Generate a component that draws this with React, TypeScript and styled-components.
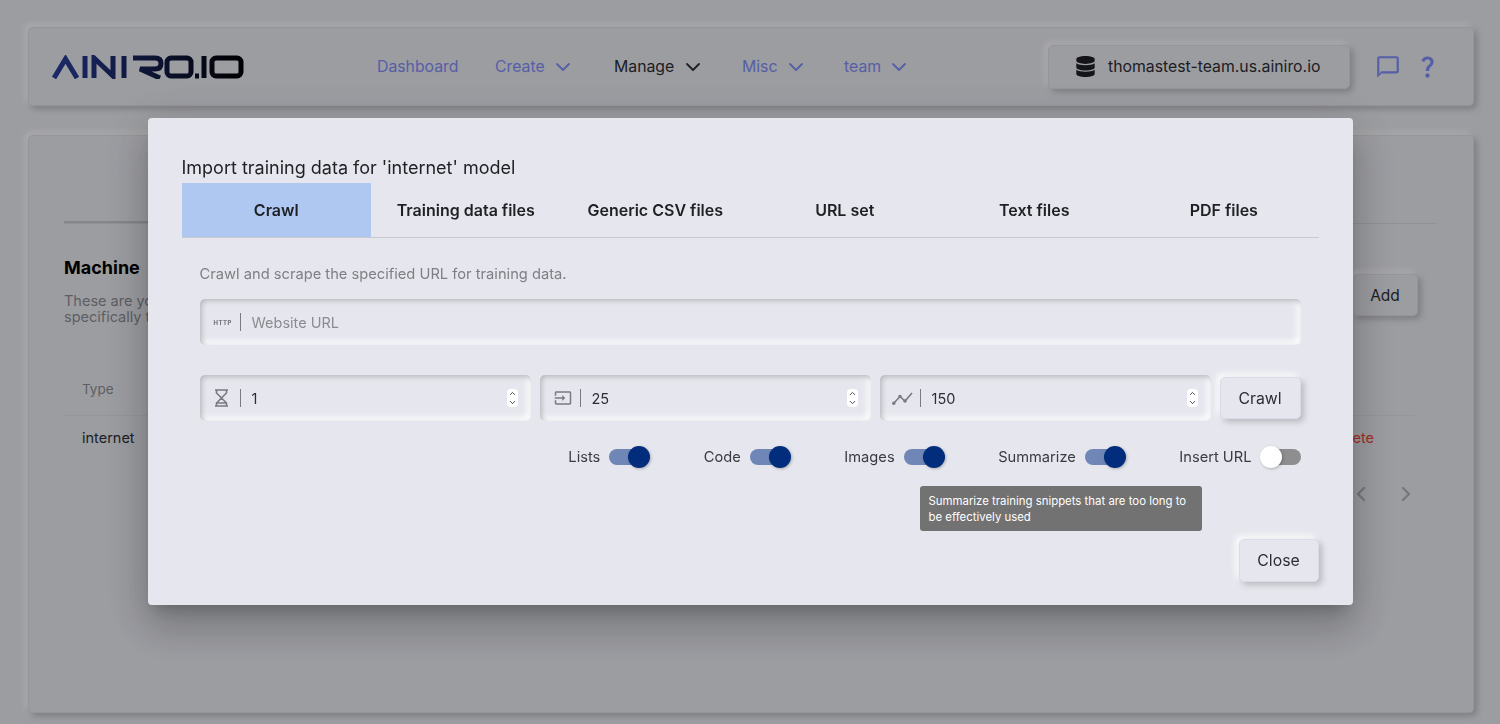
import React from "react";
import styled, { createGlobalStyle } from "styled-components";
import { ChevronDown, ChevronLeft, ChevronRight, ChevronUp } from "lucide-react";
import { FaDatabase } from "react-icons/fa";

const GlobalStyle = createGlobalStyle`
  html, body { margin: 0; padding: 0; height: 100%; overflow: hidden; }
  body { background: #e6e7ee; font-family: Inter, "Liberation Sans", sans-serif; color: #1f2024; }
  * { box-sizing: border-box; }
`;

const raised = "3px 3px 6px #b8b9be, -3px -3px 6px #ffffff";
const sunken = "inset 2px 2px 5px #b8b9be, inset -3px -3px 7px #ffffff";

const Page = styled.div`
  height: 724px;
  padding: 27px 26px 11px 28px;
  display: flex;
  flex-direction: column;
  gap: 29px;
`;

const Navbar = styled.header`
  height: 79px;
  flex: none;
  display: flex;
  align-items: center;
  padding: 0 32px 0 23px;
  border: 1px solid #dcdde6;
  border-radius: 5px;
  box-shadow: ${raised};
`;

const Logo = styled.svg`
  flex: none;
  width: 192px;
  height: 24px;
`;

const NavLinks = styled.nav`
  display: flex;
  align-items: center;
  margin-left: 133px;
  flex: 1;
`;

const NavLink = styled.a<{ $active?: boolean; $space: number }>`
  display: flex;
  align-items: center;
  gap: 6.3px;
  width: ${(p) => p.$space}px;
  flex: none;
  font-size: 15.8px;
  color: ${(p) => (p.$active ? "#2d2e33" : "#7f8cf5")};
  svg { flex: none; }
`;

const ServerButton = styled.button`
  width: 302px;
  height: 44px;
  margin-right: 25px;
  display: flex;
  align-items: center;
  gap: 12px;
  padding: 0 0 0 26px;
  background: #e6e7ee;
  border: 1px solid #dcdde6;
  border-radius: 5px;
  box-shadow: ${raised};
  font: 400 15.8px Inter, sans-serif;
  color: #2d2e33;
`;

const NavIcon = styled.svg`
  flex: none;
  color: #7f8cf5;
  fill: currentColor;
`;

const HelpIcon = styled(NavIcon)`
  margin-left: 13px;
`;

const Card = styled.main`
  flex: 1;
  padding: 85px 36px 0 35px;
  border: 1px solid #dcdde6;
  border-radius: 5px;
  box-shadow: ${raised};
`;

const Rule = styled.hr`
  margin: 0;
  border: 0;
  height: 3px;
  background:
    linear-gradient(#d5d6dd, #d5d6dd) bottom / 100% 1px no-repeat,
    linear-gradient(#c4c5cc, #c4c5cc) left / 20% 100% no-repeat;
`;

const SectionHead = styled.div`
  display: flex;
  justify-content: space-between;
  margin-top: 33px;
  padding-right: 19px;
`;

const SectionTitle = styled.h2`
  margin: 0 0 14px;
  font-size: 18px;
  font-weight: 700;
  line-height: 22px;
  color: #000;
`;

const SectionText = styled.p`
  margin: 0;
  font-size: 14.5px;
  line-height: 16px;
  color: #8b8c92;
`;

const AddButton = styled.button`
  width: 66px;
  height: 42px;
  margin-top: 17px;
  background: #e6e7ee;
  border: 1px solid #dcdde6;
  border-radius: 5px;
  box-shadow: ${raised};
  font: 400 15.5px Inter, sans-serif;
  color: #2d2e33;
`;

const Table = styled.div`
  margin: 42px 22px 0 0;
  font-size: 14.5px;
`;

const TableHead = styled.div`
  height: 49px;
  display: flex;
  align-items: center;
  padding: 0 18px 4px;
  border-bottom: 1px solid #dcdde6;
  font-size: 13.5px;
  color: #8b8c92;
`;

const TableRow = styled.div`
  height: 43px;
  display: flex;
  align-items: center;
  justify-content: space-between;
  padding: 0 41px 0 18px;
  color: #2d2e33;
`;

const DeleteLink = styled.span`
  color: #f04438;
`;

const Pager = styled.div`
  display: flex;
  justify-content: flex-end;
  gap: 21px;
  margin-top: 23px;
  padding-right: 19px;
  color: #b0b1b8;
`;

const Backdrop = styled.div`
  position: fixed;
  inset: 0;
  background: rgba(0, 0, 0, 0.32);
  display: flex;
  align-items: center;
  justify-content: center;
`;

const Modal = styled.section`
  position: relative;
  width: 1205px;
  height: 487px;
  margin-bottom: 1px;
  padding: 38px 34px 0;
  background: #e6e7ee;
  border-radius: 4px;
  box-shadow: 0 11px 15px -7px rgba(0, 0, 0, 0.2), 0 24px 38px 3px rgba(0, 0, 0, 0.14), 0 9px 46px 8px rgba(0, 0, 0, 0.12);
`;

const ModalTitle = styled.h1`
  margin: 0;
  height: 27px;
  font-size: 18px;
  font-weight: 400;
  line-height: 24px;
  color: #1f2024;
`;

const Tabs = styled.div`
  display: flex;
  border-bottom: 1px solid #c9cad0;
`;

const Tab = styled.div<{ $active?: boolean }>`
  flex: 1;
  height: 54px;
  display: flex;
  align-items: center;
  justify-content: center;
  font-size: 16px;
  font-weight: 600;
  color: #1f2024;
  background: ${(p) => (p.$active ? "#aec8f1" : "transparent")};
`;

const TabBody = styled.div`
  padding: 27px 18px 0;
`;

const Hint = styled.p`
  margin: 0 0 16px;
  font-size: 14.7px;
  line-height: 18px;
  color: #7e7f84;
`;

const Field = styled.label`
  flex: 1;
  min-width: 0;
  height: 46px;
  display: flex;
  align-items: center;
  padding: 0 12px 0 14px;
  border-radius: 5px;
  box-shadow: ${sunken};
`;

const FieldIcon = styled.span`
  flex: none;
  width: 27px;
  height: 22px;
  margin-right: 11px;
  display: flex;
  align-items: center;
  justify-content: space-between;
  color: #7a7b80;
  &::after {
    content: "";
    width: 1px;
    height: 18px;
    background: #7a7b80;
  }
`;

const HttpText = styled.span`
  font-size: 6px;
  font-weight: 800;
  letter-spacing: 0.5px;
`;

const ChartIcon = styled.svg`
  margin-left: -2px;
`;

const FieldInput = styled.input`
  flex: 1;
  min-width: 0;
  border: 0;
  outline: 0;
  padding: 0;
  background: transparent;
  font: 400 14.5px Inter, sans-serif;
  color: #2d2e33;
  &::placeholder { color: #8b8c92; }
  &::-webkit-inner-spin-button { display: none; }
`;

const Spinner = styled.span`
  flex: none;
  width: 11px;
  height: 18px;
  margin-right: 1px;
  background: #fff;
  border-radius: 4px;
  display: flex;
  flex-direction: column;
  align-items: center;
  justify-content: center;
  color: #444;
`;

const NumberRow = styled.div`
  display: flex;
  align-items: center;
  gap: 9px;
  margin-top: 30px;
`;

const ActionButton = styled.button`
  flex: none;
  width: 81px;
  height: 42px;
  background: #e6e7ee;
  border: 1px solid #d9dce8;
  border-radius: 5px;
  box-shadow: ${raised};
  font: 400 15.8px Inter, sans-serif;
  color: #2d2e33;
`;

const Options = styled.div`
  display: flex;
  justify-content: flex-end;
  gap: 54.5px;
  margin-top: 25px;
`;

const Option = styled.div`
  display: flex;
  align-items: center;
  gap: 9px;
  height: 22px;
  font-size: 14.66px;
  color: #3a3b40;
`;

const Toggle = styled.span<{ $on: boolean }>`
  position: relative;
  width: 40px;
  height: 16px;
  border-radius: 8px;
  background: ${(p) => (p.$on ? "#6f86b6" : "#8e8e90")};
  &::after {
    content: "";
    position: absolute;
    top: -3px;
    ${(p) => (p.$on ? "right: -1px;" : "left: -1px;")}
    width: 22px;
    height: 22px;
    border-radius: 50%;
    background: ${(p) => (p.$on ? "#012d7c" : "#ffffff")};
    box-shadow: 1px 1px 3px rgba(0, 0, 0, 0.25);
  }
`;

const Tooltip = styled.div`
  position: absolute;
  left: 772px;
  top: 368px;
  width: 282px;
  height: 45px;
  padding: 7px 9px;
  background: #727272;
  border-radius: 3px;
  font-size: 11.4px;
  line-height: 16px;
  color: #fff;
`;

const CloseButton = styled(ActionButton)`
  position: absolute;
  right: 34px;
  bottom: 23px;
  width: 80px;
  height: 43px;
`;

const options = [
  { label: "Lists", on: true },
  { label: "Code", on: true },
  { label: "Images", on: true },
  { label: "Summarize", on: true },
  { label: "Insert URL", on: false },
];

const tabs = ["Crawl", "Training data files", "Generic CSV files", "URL set", "Text files", "PDF files"];

const NumberField = ({ icon, value }: { icon: React.ReactNode; value: number }) => (
  <Field>
    <FieldIcon>{icon}</FieldIcon>
    <FieldInput type="number" defaultValue={value} />
    <Spinner>
      <ChevronUp size={9} strokeWidth={2.5} />
      <ChevronDown size={9} strokeWidth={2.5} />
    </Spinner>
  </Field>
);

export default function App() {
  return (
    <>
      <GlobalStyle />
      <Page>
        <Navbar>
          <Logo viewBox="0 0 192 24" fill="none" stroke="url(#logoFade)" strokeWidth="5">
            <defs>
              <linearGradient id="logoFade" gradientUnits="userSpaceOnUse" x1="0" y1="0" x2="192" y2="0">
                <stop offset="0" stopColor="#2a3f9e" />
                <stop offset="1" stopColor="#000" />
              </linearGradient>
            </defs>
            <path d="M2 23 L13.5 4 L25 23" />
            <path d="M33 1v22M42 23V3L61 21V1M72 1v22" />
            <path d="M81 3h22q6 0 6 5.5t-6 5.5H88l20 9" />
            <rect x="115" y="3" width="24" height="18" rx="4" />
            <path d="M143 21h4M152 1v22" />
            <rect x="160" y="3" width="29" height="18" rx="4" />
          </Logo>
          <NavLinks>
            <NavLink $space={118}>Dashboard</NavLink>
            <NavLink $space={119}>Create <ChevronDown size={24} strokeWidth={1.8} /></NavLink>
            <NavLink $space={128} $active>Manage <ChevronDown size={24} strokeWidth={1.8} /></NavLink>
            <NavLink $space={102}>Misc <ChevronDown size={24} strokeWidth={1.8} /></NavLink>
            <NavLink $space={80}>team <ChevronDown size={24} strokeWidth={1.8} /></NavLink>
          </NavLinks>
          <ServerButton><FaDatabase size={21} color="#1f2024" /> thomastest-team.us.ainiro.io</ServerButton>
          <NavIcon width="26" height="26" viewBox="0 0 24 24">
            <path d="M20 2H4c-1.1 0-2 .9-2 2v18l4-4h14c1.1 0 2-.9 2-2V4c0-1.1-.9-2-2-2zm0 14H6l-2 2V4h16v12z" />
          </NavIcon>
          <HelpIcon width="27" height="27" viewBox="0 0 24 24">
            <path d="M11.07 12.85c.77-1.39 2.25-2.21 3.11-3.44.91-1.29.4-3.7-2.18-3.7-1.69 0-2.52 1.28-2.87 2.34L6.54 6.96C7.25 4.83 9.18 3 11.99 3c2.35 0 3.96 1.07 4.78 2.41.7 1.15 1.11 3.3.03 4.9-1.2 1.77-2.35 2.31-2.97 3.45-.25.46-.35.76-.35 2.24h-2.89c-.01-.78-.13-2.05.48-3.15zM14 20c0 1.1-.9 2-2 2s-2-.9-2-2 .9-2 2-2 2 .9 2 2z" />
          </HelpIcon>
        </Navbar>
        <Card>
          <Rule />
          <SectionHead>
            <div>
              <SectionTitle>Machine</SectionTitle>
              <SectionText>These are your<br />specifically to</SectionText>
            </div>
            <AddButton>Add</AddButton>
          </SectionHead>
          <Table>
            <TableHead>Type</TableHead>
            <TableRow><span>internet</span><DeleteLink>Delete</DeleteLink></TableRow>
          </Table>
          <Pager>
            <ChevronLeft size={24} strokeWidth={2.4} />
            <ChevronRight size={24} strokeWidth={2.4} />
          </Pager>
        </Card>
      </Page>
      <Backdrop>
        <Modal>
          <ModalTitle>Import training data for 'internet' model</ModalTitle>
          <Tabs>
            {tabs.map((tab, index) => (
              <Tab key={tab} $active={index === 0}>{tab}</Tab>
            ))}
          </Tabs>
          <TabBody>
            <Hint>Crawl and scrape the specified URL for training data.</Hint>
            <Field>
              <FieldIcon><HttpText>HTTP</HttpText></FieldIcon>
              <FieldInput placeholder="Website URL" />
            </Field>
            <NumberRow>
              <NumberField
                value={1}
                icon={
                  <svg width="15" height="18" viewBox="0 0 15 18" fill="none" stroke="currentColor" strokeWidth="1.6">
                    <path d="M1 1h13M1 17h13M2.5 1v3l5 5-5 5v3M12.5 1v3l-5 5 5 5v3M3 14h9" />
                  </svg>
                }
              />
              <NumberField
                value={25}
                icon={
                  <svg width="18" height="18" viewBox="0 0 24 24" fill="currentColor">
                    <path d="M21 3.01H3c-1.1 0-2 .9-2 2V9h2V4.99h18v14.03H3V15H1v4.01c0 1.1.9 1.98 2 1.98h18c1.1 0 2-.88 2-1.98v-14c0-1.11-.9-2-2-2zM11 16l4-4-4-4v3H1v2h10v3z" />
                  </svg>
                }
              />
              <NumberField
                value={150}
                icon={
                  <ChartIcon width="22" height="22" viewBox="0 0 22 22" fill="none" stroke="currentColor" strokeWidth="1.6">
                    <path d="M1.5 16.5L8 9.5l5 4.5 7-8" />
                    <circle cx="1.8" cy="16.2" r="1" fill="currentColor" />
                    <circle cx="8" cy="9.5" r="1" fill="currentColor" />
                    <circle cx="13" cy="14" r="1" fill="currentColor" />
                  </ChartIcon>
                }
              />
              <ActionButton>Crawl</ActionButton>
            </NumberRow>
            <Options>
              {options.map((option) => (
                <Option key={option.label}>
                  {option.label}
                  <Toggle $on={option.on} />
                </Option>
              ))}
            </Options>
          </TabBody>
          <Tooltip>Summarize training snippets that are too long to be effectively used</Tooltip>
          <CloseButton>Close</CloseButton>
        </Modal>
      </Backdrop>
    </>
  );
}
